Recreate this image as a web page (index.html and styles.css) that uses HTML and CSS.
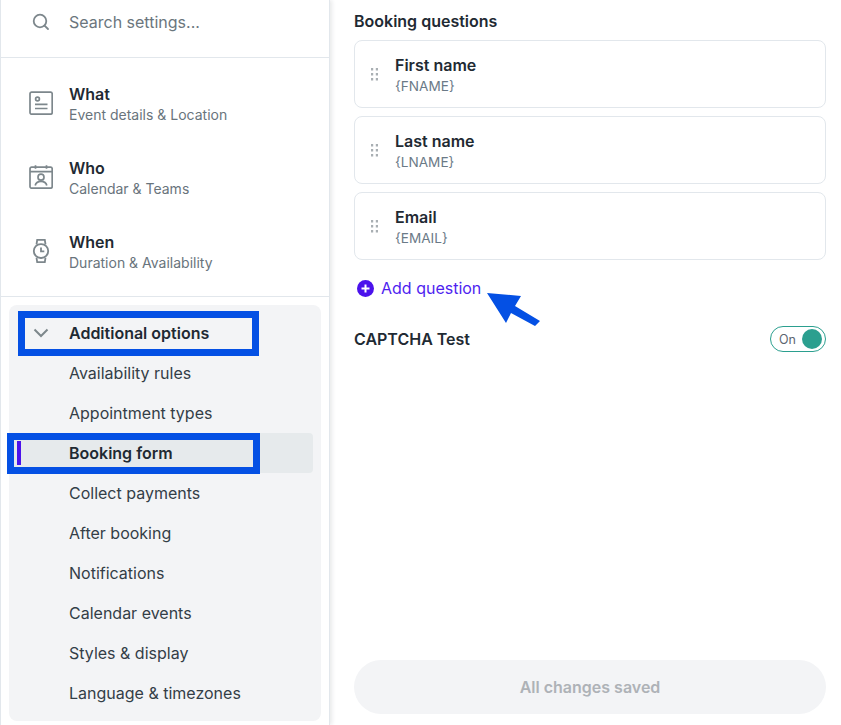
FILE: index.html
```html
<!DOCTYPE html>
<html lang="en">
<head>
<meta charset="utf-8">
<title>Booking form settings</title>
<link rel="stylesheet" href="styles.css">
</head>
<body>
<div class="app">
  <aside class="sidebar">
    <div class="search">
      <svg class="search-icon" width="20" height="20" viewBox="0 0 20 20" fill="none" stroke="#7d878c" stroke-width="1.8" stroke-linecap="round"><circle cx="9" cy="9" r="6.3"/><path d="M13.6 13.6 17 17"/></svg>
      <span>Search settings...</span>
    </div>
    <nav class="primary">
      <div class="primary-item">
        <svg class="primary-icon" width="24" height="24" viewBox="0 0 24 24" fill="none" stroke="#7d878c" stroke-width="1.7"><rect x="1" y="1.2" width="22.2" height="22" rx="1.6"/><circle cx="8.5" cy="8" r="1.9"/><path d="M6 13.3h12.5M6 17.5h12.5"/></svg>
        <div><div class="primary-title">What</div><div class="primary-sub">Event details &amp; Location</div></div>
      </div>
      <div class="primary-item">
        <svg class="primary-icon" width="24" height="24" viewBox="0 0 24 24" fill="none" stroke="#7d878c" stroke-width="1.7"><rect x="1" y="2.2" width="22.2" height="21" rx="1.6"/><path d="M1 6.6h22.2M6.5 .2v3.6M17.5 .2v3.6"/><circle cx="12" cy="12.2" r="3"/><path d="M6.2 20.5c.6-3 3-4.2 5.8-4.2s5.200 1.200 5.800 4.200"/></svg>
        <div><div class="primary-title">Who</div><div class="primary-sub">Calendar &amp; Teams</div></div>
      </div>
      <div class="primary-item">
        <svg class="primary-icon" width="24" height="24" viewBox="0 0 24 24" fill="none" stroke="#7d878c" stroke-width="1.8"><rect x="4.800" y="5.200" width="14.400" height="13.800" rx="6.900"/><path d="M7.500 5.500 8.200.8h7.600l.7 4.700M7.500 18.700l.7 4.500h7.600l.7-4.500M12 8.500v3.800h3.300"/></svg>
        <div><div class="primary-title">When</div><div class="primary-sub">Duration &amp; Availability</div></div>
      </div>
    </nav>
    <div class="panel-wrap">
      <div class="panel">
        <div class="panel-head">
          <svg class="chevron" width="16" height="10" viewBox="0 0 16 10" fill="none" stroke="#7d878c" stroke-width="2"><path d="M1.500 1.500 8 8l6.500-6.500"/></svg>
          <span>Additional options</span>
        </div>
        <div class="panel-row">Availability rules</div>
        <div class="panel-row">Appointment types</div>
        <div class="panel-row active"><i class="active-bar"></i>Booking form</div>
        <div class="panel-row">Collect payments</div>
        <div class="panel-row">After booking</div>
        <div class="panel-row">Notifications</div>
        <div class="panel-row">Calendar events</div>
        <div class="panel-row">Styles &amp; display</div>
        <div class="panel-row">Language &amp; timezones</div>
      </div>
    </div>
  </aside>
  <main class="main">
    <h2 class="section-title">Booking questions</h2>
    <div class="cards">
      <div class="card">
        <svg class="grip" width="7" height="13" viewBox="0 0 7 13" fill="#a9afb3"><rect x="0" y="0" width="2.200" height="2.500"/><rect x="4.800" y="0" width="2.200" height="2.500"/><rect x="0" y="5" width="2.200" height="2.500"/><rect x="4.800" y="5" width="2.200" height="2.500"/><rect x="0" y="10" width="2.200" height="2.500"/><rect x="4.800" y="10" width="2.200" height="2.500"/></svg>
        <div><div class="card-title">First name</div><div class="card-sub">{FNAME}</div></div>
      </div>
      <div class="card">
        <svg class="grip" width="7" height="13" viewBox="0 0 7 13" fill="#a9afb3"><rect x="0" y="0" width="2.200" height="2.500"/><rect x="4.800" y="0" width="2.200" height="2.500"/><rect x="0" y="5" width="2.200" height="2.500"/><rect x="4.800" y="5" width="2.200" height="2.500"/><rect x="0" y="10" width="2.200" height="2.500"/><rect x="4.800" y="10" width="2.200" height="2.500"/></svg>
        <div><div class="card-title">Last name</div><div class="card-sub">{LNAME}</div></div>
      </div>
      <div class="card">
        <svg class="grip" width="7" height="13" viewBox="0 0 7 13" fill="#a9afb3"><rect x="0" y="0" width="2.200" height="2.500"/><rect x="4.800" y="0" width="2.200" height="2.500"/><rect x="0" y="5" width="2.200" height="2.500"/><rect x="4.800" y="5" width="2.200" height="2.500"/><rect x="0" y="10" width="2.200" height="2.500"/><rect x="4.800" y="10" width="2.200" height="2.500"/></svg>
        <div><div class="card-title">Email</div><div class="card-sub">{EMAIL}</div></div>
      </div>
    </div>
    <div class="add">
      <svg width="17" height="17" viewBox="0 0 17 17"><circle cx="8.500" cy="8.500" r="8.500" fill="#4b12ec"/><path d="M8.500 4.500v8M4.500 8.500h8" stroke="#fff" stroke-width="2"/></svg>
      <span>Add question</span>
    </div>
    <div class="captcha">
      <span>CAPTCHA Test</span>
      <div class="toggle"><span>On</span><i class="knob"></i></div>
    </div>
    <div class="save">All changes saved</div>
  </main>
  <div class="mark mark-options"></div>
  <div class="mark mark-booking"></div>
  <svg class="arrow" width="56" height="36" viewBox="0 0 56 36"><path d="M0 0 34 3 28 13 53 28 48 33 24 20 19 30Z" fill="#0450e4"/></svg>
</div>
</body>
</html>
```
FILE: styles.css
```css
* { box-sizing: border-box; }
html, body { margin: 0; height: 100%; background: #fff; overflow: hidden; }
body { font-family: Inter, "Liberation Sans", sans-serif; color: #1f2a33; font-size: 16px; }
.app { position: relative; display: flex; width: 841px; height: 725px; }
.sidebar { width: 330px; height: 725px; flex: none; display: flex; flex-direction: column; border-left: 1px solid #e2e7ec; border-right: 1px solid #e2e7ec; box-shadow: 2px 0 4px rgba(30, 40, 50, .10); background: #fff; }
.search { height: 58px; padding: 0 0 13px 30px; display: flex; align-items: center; gap: 18px; border-bottom: 1px solid #e2e7ec; color: #6b767d; }
.search-icon { flex: none; }
.primary { height: 239px; border-bottom: 1px solid #e2e7ec; padding-top: 15px; display: flex; flex-direction: column; gap: 14px; }
.primary-item { height: 60px; display: flex; align-items: center; gap: 16px; padding-left: 28px; }
.primary-icon { flex: none; }
.primary-title { font-weight: 600; line-height: 24px; color: #1f2a33; }
.primary-sub { font-size: 14px; line-height: 18px; color: #69747c; }
.panel-wrap { padding: 8px 8px 4px 8px; flex: 1; }
.panel { width: 312px; height: 416px; background: #f3f4f6; border-radius: 8px; padding: 8px 8px 0 0; }
.panel-head { height: 40px; display: flex; align-items: center; gap: 20px; padding-left: 24px; font-weight: 600; color: #1f2a33; }
.chevron { flex: none; }
.panel-row { position: relative; height: 40px; line-height: 40px; padding-left: 60px; color: #333e47; }
.panel-row.active { width: 306px; margin-left: -2px; padding-left: 62px; background: #e6eaec; border-radius: 4px; font-weight: 600; color: #1f2a33; }
.active-bar { position: absolute; left: 10px; top: 8px; width: 4px; height: 24px; background: #4b12ec; }
.main { flex: 1; display: flex; flex-direction: column; padding: 10px 15px 11px 24px; }
.section-title { margin: 0 0 8px; font-size: 16px; line-height: 22px; font-weight: 600; color: #1f2a33; }
.cards { display: flex; flex-direction: column; gap: 8px; }
.card { height: 68px; border: 1px solid #e2e7ec; border-radius: 8px; display: flex; align-items: center; gap: 17px; padding: 2px 0 0 16px; }
.grip { flex: none; margin-top: -2px; }
.card-title { font-weight: 600; line-height: 22px; color: #1f2a33; }
.card-sub { font-size: 13.6px; line-height: 20px; color: #6b7a87; }
.add { display: flex; align-items: center; gap: 7px; margin-top: 18px; height: 20px; padding-left: 3px; color: #4f1ff0; }
.captcha { display: flex; align-items: center; justify-content: space-between; margin-top: 28px; height: 26px; font-weight: 600; color: #1f2a33; }
.toggle { width: 56px; height: 26px; border: 1px solid #2b9f8f; border-radius: 13px; display: flex; align-items: center; justify-content: space-between; padding: 0 3px 0 8px; font-size: 12.5px; font-weight: 400; color: #5b6670; }
.knob { width: 20px; height: 20px; border-radius: 50%; background: #2b9f8f; }
.save { margin-top: auto; height: 54px; border-radius: 27px; background: #f3f4f6; display: flex; align-items: center; justify-content: center; font-weight: 600; color: #aeb2b7; }
.mark { position: absolute; border: 7px solid #0450e4; }
.mark-options { left: 18px; top: 311px; width: 241px; height: 45px; }
.mark-booking { left: 7px; top: 433px; width: 253px; height: 41px; }
.arrow { position: absolute; left: 487px; top: 293px; }
```
